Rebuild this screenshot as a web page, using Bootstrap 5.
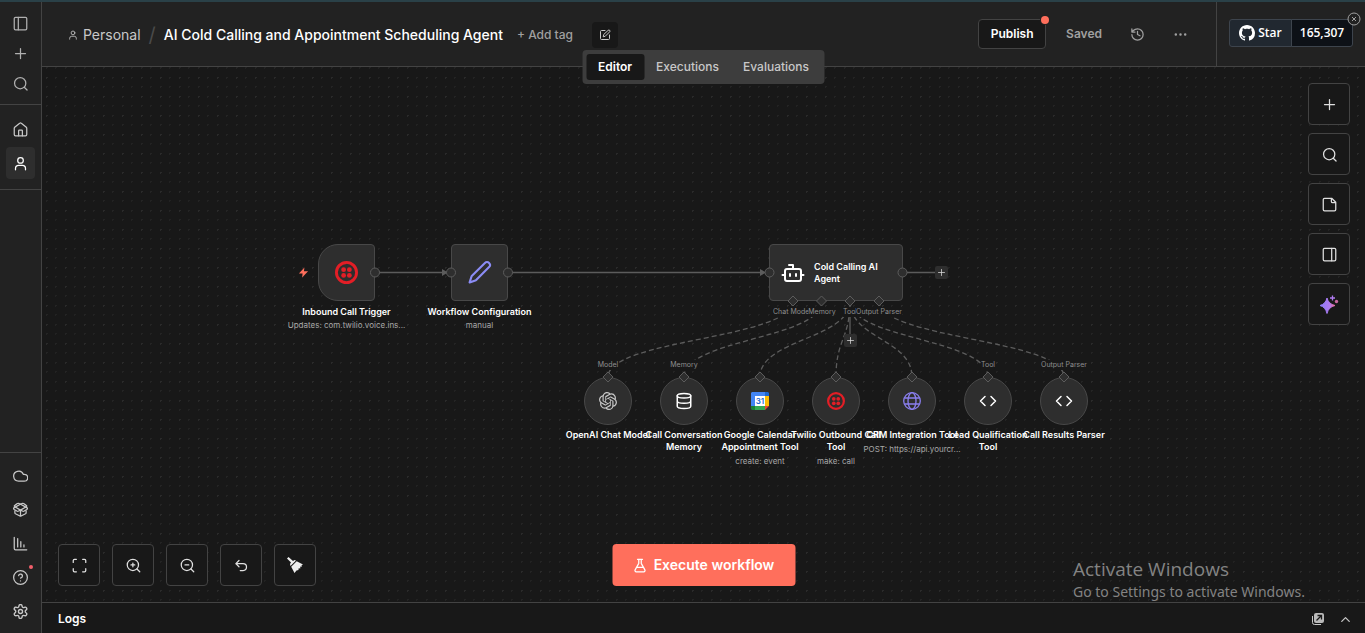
<!DOCTYPE html>
<html lang="en" data-bs-theme="dark">
<head>
<meta charset="utf-8">
<meta name="viewport" content="width=device-width, initial-scale=1">
<title>AI Cold Calling and Appointment Scheduling Agent</title>
<link href="https://cdn.jsdelivr.net/npm/bootstrap@5.3.0/dist/css/bootstrap.min.css" rel="stylesheet">
<style>
  body { font-family: Inter, "Liberation Sans", sans-serif; font-size: 12px; line-height: 20px; background: #181818; color: #fff; }
  svg { display: block; flex: none; }
  .ico { width: 15px; height: 15px; fill: none; stroke: currentColor; stroke-width: 2; stroke-linecap: round; stroke-linejoin: round; }
  .ico-lg { width: 24px; height: 24px; }
  .ico-md { width: 18px; height: 18px; }
  .ico-sm { width: 12px; height: 12px; }
  .ico-xs { width: 10px; height: 10px; }
  .accent-bar { height: 2px; background: #2a4148; flex: none; }
  .side { width: 42px; background: #222; border-right: 1px solid #434343; color: #b0b0b0; }
  .side-top { padding: 6px 0; border-bottom: 1px solid #434343; }
  .side-mid { padding: 8px 0; border-bottom: 1px solid #434343; }
  .side-low { padding: 6px 0 4px; border-top: 1px solid #434343; }
  .side a { width: 29px; height: 30px; margin: 0 auto; border-radius: 4px; color: inherit; display: flex; align-items: center; justify-content: center; position: relative; }
  .side-mid a, .side-low a { height: 32px; margin-bottom: 2px; color: #c8c8c8; }
  .side a.current { background: #2e2e2e; color: #fff; }
  .alert-dot { position: absolute; top: 4px; right: 2px; width: 4px; height: 4px; border-radius: 50%; background: #f25f6b; }
  .topbar { height: 65px; background: #222; border-bottom: 1px solid #434343; }
  .crumbs { font-size: 14px; padding: 1px 0 0 26px; }
  .crumbs a { color: #c8c8c8; text-decoration: none; gap: 5px; }
  .crumbs .slash { color: #4a4a4a; font-size: 20px; margin: 0 8px; }
  .crumbs h1 { font-size: 14px; font-weight: 500; line-height: 20px; color: #fff; margin: 0; }
  .flat { border: 0; background: none; padding: 0; color: #a0a0a0; }
  .add-tag { font-size: 12px; font-weight: 500; margin-left: 14px; }
  .edit-btn { width: 26px; height: 26px; background: #181818; color: #c8c8c8; border-radius: 4px; margin-left: 19px; }
  .publish { width: 68px; height: 30px; border: 1px solid #434343; border-radius: 4px; background: #181818; color: #fff; font-weight: 600; padding: 0; position: relative; }
  .publish i { position: absolute; top: -4px; right: -4px; width: 8px; height: 8px; background: #ff6f5c; border-radius: 50%; box-shadow: 0 0 0 1px #222; }
  .saved { color: #a0a0a0; font-weight: 600; }
  .gh-zone { border-left: 1px solid #434343; padding: 17px 12px 0; width: 149px; }
  .gh { position: relative; height: 28px; font-family: "Open Sans", sans-serif; font-size: 12px; font-weight: 600; }
  .gh a { color: #fff; text-decoration: none; border: 1px solid #3d444d; display: flex; align-items: center; justify-content: center; }
  .gh-star { background: #212830; width: 63px; border-radius: 3px 0 0 3px; gap: 3px; }
  .gh-count { background: #0d1117; width: 62px; border-radius: 0 3px 3px 0; margin-left: -1px; }
  .gh-close { position: absolute; top: -7px; right: -8px; color: #a0a0a0; }
  .view-tabs { position: absolute; z-index: 5; top: -17px; left: 50%; transform: translateX(-50%); padding: 4px; background: #3d3d3d; border-radius: 4px; font-size: 12px; font-weight: 500; }
  .view-tabs .nav-link { padding: 3px 12px; color: #c8c8c8; border-radius: 3px; line-height: 20px; font-weight: 500; }
  .view-tabs .nav-link.active { background: #181818; color: #fff; font-weight: 600; }
  .board { background-color: #181818;
    background-image: radial-gradient(circle, #2a2a2a 0 1px, transparent 1px), radial-gradient(circle, #242424 0 1px, transparent 1px), radial-gradient(circle, #242424 0 1px, transparent 1px), radial-gradient(circle, #222 0 1px, transparent 1px);
    background-size: 19px 19px; background-position: -5px 1px, 4px 1px, -5px -9px, 4px -9px; }
  .tile { width: 42px; height: 42px; padding: 0; border: 1px solid #434343; border-radius: 4px; background: #181818; color: #e0e0e0; display: flex; align-items: center; justify-content: center; }
  .dock { position: absolute; bottom: 16px; left: 16px; gap: 12px; }
  .rail { position: absolute; top: 16px; right: 15px; gap: 8px; }
  .run { position: absolute; bottom: 16px; left: 50%; transform: translateX(-50%); height: 42px; width: 183px; border: 0; border-radius: 4px; background: #ff6f5c; color: #fff; font-size: 14px; font-weight: 600; gap: 6px; }
  .logs { height: 31px; border-top: 1px solid #434343; padding: 2px 12px 0 16px; background: #181818; font-size: 12px; font-weight: 600; }
  .logs .flat { color: #c8c8c8; }
  .pop-out { margin-right: 14px; }
  .watermark { position: absolute; z-index: 9; right: 56px; bottom: 31px; color: #838383; font-family: "Open Sans", sans-serif; pointer-events: none; width: 236px; white-space: nowrap; }
  .watermark b { display: block; font-weight: 400; font-size: 19px; line-height: 26px; }
  .watermark span { display: block; font-family: "Noto Sans", sans-serif; font-size: 14px; line-height: 20px; }

  /* workflow graph: the nodes sit on a free canvas */
  .wires { position: absolute; left: 0; top: 0; width: 1100px; height: 420px; }
  .wires path { fill: none; stroke: #5c5c5c; stroke-width: 1.3; }
  .wires .dashed { stroke-dasharray: 5 3; }
  .wires .heads { fill: #5c5c5c; stroke: none; }
  .step { position: absolute; top: 177px; width: 57px; height: 57px; border: 1px solid #484848; border-radius: 4px; background: #2e2e2e; display: flex; align-items: center; justify-content: center; }
  .step.trigger { left: 276px; border-radius: 20px 4px 4px 20px; }
  .step.config { left: 409px; }
  .step.agent { left: 727px; width: 134px; justify-content: start; gap: 9px; padding-left: 11px; font-size: 9px; font-weight: 600; line-height: 12px; }
  .round { top: 310px; width: 48px; height: 48px; border-radius: 50%; }
  .n1 { left: 542px; } .n2 { left: 618px; } .n3 { left: 694px; } .n4 { left: 770px; } .n5 { left: 846px; } .n6 { left: 922px; } .n7 { left: 998px; }
  .caption { position: absolute; top: 100%; left: 50%; width: 130px; margin: 6px 0 0 -65px; text-align: center; font-size: 9px; font-weight: 600; line-height: 12px; }
  .round .caption { width: 100px; margin: 5px 0 0 -50px; white-space: nowrap; }
  .caption small { display: block; font-size: 8px; font-weight: 400; color: #a8a8a8; line-height: 14px; }
  .round small { margin-top: 1px; }
  .bolt { position: absolute; left: -21px; top: 22px; }
  .ports { position: absolute; left: 0; top: 0; width: 1100px; height: 420px; fill: #2e2e2e; stroke: #5c5c5c; pointer-events: none; }
  .port-name { position: absolute; top: 240px; transform: translateX(-50%); font-size: 7px; line-height: 10px; color: #8f8f8f; background: #181818; white-space: nowrap; }
  .port-name.low { top: 293px; }
  .p1 { left: 750px; } .p2 { left: 780px; } .p3 { left: 808px; } .p4 { left: 837px; }
  .q1 { left: 566px; } .q2 { left: 642px; } .q6 { left: 946px; } .q7 { left: 1022px; }
  .adder { position: absolute; width: 13px; height: 13px; padding: 0; border: 0; border-radius: 2px; background: #2e2e2e; color: #ddd; display: flex; align-items: center; justify-content: center; }
  .adder .ico { width: 9px; height: 9px; }
  .a1 { left: 893px; top: 199px; } .a2 { left: 802px; top: 267px; }
</style>
</head>
<body class="vh-100 d-flex flex-column overflow-hidden position-relative">
<svg class="d-none" xmlns="http://www.w3.org/2000/svg">
  <symbol id="plus" viewBox="0 0 24 24"><path d="M4 12h16M12 4v16"/></symbol>
  <symbol id="search" viewBox="0 0 24 24"><circle cx="11.500" cy="11.500" r="9"/><path d="m22.500 22.500-4.500-4.500"/></symbol>
  <symbol id="user" viewBox="0 0 24 24"><circle cx="12" cy="7" r="4.500"/><path d="M4 22v-2a5 5 0 0 1 5-5h6a5 5 0 0 1 5 5v2"/></symbol>
  <symbol id="twilio" viewBox="0 0 24 24"><g stroke="none" fill="#e31e26"><path fill-rule="evenodd" d="M12 0a12 12 0 1 0 0 24 12 12 0 0 0 0-24zm0 3a9 9 0 1 1 0 18 9 9 0 0 1 0-18z"/><circle cx="9" cy="9" r="2.500"/><circle cx="15" cy="9" r="2.500"/><circle cx="9" cy="15" r="2.500"/><circle cx="15" cy="15" r="2.500"/></g></symbol>
  <symbol id="code" viewBox="0 0 24 24"><path d="m16 18 6-6-6-6M8 6l-6 6 6 6"/></symbol>
</svg>

<div class="accent-bar"></div>
<div class="d-flex flex-grow-1">
  <nav class="side d-flex flex-column flex-shrink-0" aria-label="Main">
    <div class="side-top">
      <a href="#" aria-label="Toggle sidebar"><svg class="ico" viewBox="0 0 24 24"><rect x="2" y="2" width="20" height="20" rx="2"/><path d="M8.500 2v20"/></svg></a>
      <a href="#" aria-label="Add"><svg class="ico"><use href="#plus"/></svg></a>
      <a href="#" aria-label="Search"><svg class="ico"><use href="#search"/></svg></a>
    </div>
    <div class="side-mid">
      <a href="#" aria-label="Overview"><svg class="ico" viewBox="0 0 24 24"><path d="M15 22v-8a1 1 0 0 0-1-1h-4a1 1 0 0 0-1 1v8"/><path d="M2 10a2 2 0 0 1 .7-1.500l8-6.500a2 2 0 0 1 2.600 0l8 6.500a2 2 0 0 1 .7 1.500v10a2 2 0 0 1-2 2H4a2 2 0 0 1-2-2z"/></svg></a>
      <a href="#" class="current" aria-label="Personal"><svg class="ico"><use href="#user"/></svg></a>
    </div>
    <div class="side-low mt-auto">
      <a href="#" aria-label="Admin panel"><svg class="ico" viewBox="0 0 24 24"><path d="M18 21H9A8 8 0 1 1 16.500 10H18a5.500 5.500 0 0 1 0 11Z"/></svg></a>
      <a href="#" aria-label="Templates"><svg class="ico" viewBox="0 0 24 24"><path d="M12 22v-9M3 14v3a2 2 0 0 0 1 1.700l7 3.800a2 2 0 0 0 2 0l7-3.800a2 2 0 0 0 1-1.700v-3"/><path d="m12 13-8.500-5c-2-1-2-2 0-3L7 2.500c1-.6 2-.6 3 0l12 6.500c1.500 1 1.500 2 0 3l-4 2.500c-1 .5-2 .5-3 0z"/><path d="m12 13 8.500-5c2-1 2-2 0-3L17 2.500c-1-.6-2-.6-3 0L2 9c-1.500 1-1.500 2 0 3l4 2.500c1 .5 2 .5 3 0z"/></svg></a>
      <a href="#" aria-label="Insights"><svg class="ico" viewBox="0 0 24 24"><path d="M2 2v18a2 2 0 0 0 2 2h18M7.500 17.500V4M12.500 17.500V9M17.500 17.500V14"/></svg></a>
      <a href="#" aria-label="Help"><svg class="ico" viewBox="0 0 24 24"><circle cx="12" cy="12" r="11"/><path d="M9 9a3 3 0 0 1 6 1c0 2-3 3-3 3M12 17.500h.01"/></svg><span class="alert-dot"></span></a>
      <a href="#" aria-label="Settings"><svg class="ico" viewBox="1 1 22 22"><path d="M9.700 4.100a2.300 2.300 0 0 1 4.600 0 2.300 2.300 0 0 0 3.300 1.900 2.300 2.300 0 0 1 2.400 4 2.300 2.300 0 0 0 0 3.900 2.300 2.300 0 0 1-2.400 4 2.300 2.300 0 0 0-3.300 2 2.300 2.300 0 0 1-4.600 0 2.300 2.300 0 0 0-3.300-2 2.300 2.300 0 0 1-2.400-4 2.300 2.300 0 0 0 0-3.900A2.300 2.300 0 0 1 6.400 6a2.300 2.300 0 0 0 3.300-1.900"/><circle cx="12" cy="12" r="3"/></svg></a>
    </div>
  </nav>

  <div class="d-flex flex-column flex-grow-1">
    <header class="topbar d-flex">
      <div class="crumbs d-flex align-items-center flex-grow-1">
        <a href="#" class="d-flex align-items-center"><svg class="ico ico-xs"><use href="#user"/></svg>Personal</a>
        <span class="slash">/</span>
        <h1>AI Cold Calling and Appointment Scheduling Agent</h1>
        <button class="flat add-tag">+ Add tag</button>
        <button class="flat edit-btn d-flex align-items-center justify-content-center" aria-label="Edit description"><svg class="ico ico-sm" viewBox="0 0 24 24"><path d="M12 3H5a2 2 0 0 0-2 2v14a2 2 0 0 0 2 2h14a2 2 0 0 0 2-2v-7"/><path d="M18.400 2.600a2 2 0 0 1 3 3l-9 9-4 1 1-4z"/></svg></button>
      </div>
      <div class="d-flex align-items-center">
        <button class="publish">Publish<i></i></button>
        <span class="saved ms-3 px-1">Saved</span>
        <button class="flat ms-4" aria-label="History"><svg class="ico" viewBox="0 0 24 24"><path d="M3 12a9 9 0 1 0 9-9 9.800 9.800 0 0 0-6.700 2.700L3 8M3 3v5h5M12 7v5l4 2"/></svg></button>
        <button class="flat ms-4 me-4 px-1" aria-label="More"><svg class="ico" viewBox="0 0 24 24"><path d="M4.500 12h.01M12 12h.01M19.500 12h.01" stroke-width="4"/></svg></button>
        <div class="gh-zone align-self-stretch">
          <div class="gh d-flex">
            <a href="#" class="gh-star"><svg width="16" height="16" viewBox="0 0 16 16" fill="#fff"><path d="M8 0C3.580 0 0 3.580 0 8c0 3.540 2.290 6.530 5.470 7.590.4.070.55-.17.55-.38 0-.19-.01-.82-.01-1.490-2.010.37-2.530-.49-2.690-.94-.09-.23-.48-.94-.82-1.130-.28-.15-.68-.52-.01-.53.63-.01 1.080.58 1.230.82.72 1.210 1.870.87 2.330.66.070-.52.28-.87.51-1.070-1.780-.2-3.640-.89-3.640-3.950 0-.87.31-1.590.82-2.150-.08-.2-.36-1.020.08-2.120 0 0 .67-.21 2.200.82.64-.18 1.320-.27 2-.27s1.360.09 2 .27c1.530-1.040 2.200-.82 2.200-.82.44 1.100.16 1.920.08 2.120.51.56.82 1.270.82 2.150 0 3.070-1.870 3.750-3.650 3.950.29.25.54.73.54 1.480 0 1.070-.01 1.930-.01 2.200 0 .21.15.46.55.38A8.010 8.010 0 0 0 16 8c0-4.420-3.580-8-8-8z"/></svg>Star</a>
            <a href="#" class="gh-count">165,307</a>
            <button class="flat gh-close" aria-label="Dismiss"><svg width="14" height="14" viewBox="0 0 14 14" fill="#222" stroke="currentColor"><circle cx="7" cy="7" r="6"/><path d="m5 5 4 4M9 5 5 9"/></svg></button>
          </div>
        </div>
      </div>
    </header>

    <main class="board flex-grow-1 position-relative">
      <ul class="view-tabs nav flex-nowrap">
        <li><a class="nav-link active" href="#">Editor</a></li>
        <li><a class="nav-link" href="#">Executions</a></li>
        <li><a class="nav-link" href="#">Evaluations</a></li>
      </ul>

      <svg class="wires" viewBox="42 67 1100 420">
        <path d="M375 272.500H445M508 272.500H764M903 272.500H936M850 301V335"/>
        <g class="dashed">
          <path d="M793 301C793 339 608 339 608 377"/><path d="M822 301C822 339 684 339 684 377"/>
          <path d="M850 301C850 339 760 339 760 377"/><path d="M850 301C850 339 836 339 836 377"/>
          <path d="M850 301C850 339 912 339 912 377"/><path d="M850 301C850 339 988 339 988 377"/>
          <path d="M879 301C879 339 1064 339 1064 377"/>
        </g>
        <path class="heads" d="M442 269v7l6-3.500zM760 269v7l6-3.500z"/>
      </svg>

      <span class="port-name p1">Chat Model</span><span class="port-name p3">Tool</span><span class="port-name p2">Memory</span><span class="port-name p4">Output Parser</span>
      <span class="port-name low q1">Model</span><span class="port-name low q2">Memory</span><span class="port-name low q6">Tool</span><span class="port-name low q7">Output Parser</span>

      <div class="step trigger">
        <svg class="bolt" width="11" height="11" viewBox="0 0 24 24" fill="#ff6f5c"><path d="M14 1 2 14h8l-1 9L22 9h-9z"/></svg>
        <svg width="23" height="23"><use href="#twilio"/></svg>
        <div class="caption">Inbound Call Trigger<small>Updates: com.twilio.voice.ins...</small></div>
      </div>
      <div class="step config">
        <svg width="25" height="25" viewBox="0 0 24 24" fill="none" stroke="#8b8cf5" stroke-width="2" stroke-linejoin="round"><path d="M21.200 6.800a1 1 0 0 0-4-4L4.800 15.200a2 2 0 0 0-.5.800L2.500 21.500 8 19.700a2 2 0 0 0 .8-.5z"/></svg>
        <div class="caption">Workflow Configuration<small>manual</small></div>
      </div>
      <div class="step agent">
        <svg class="ico ico-lg" viewBox="0 0 24 24"><path d="M12 8V4H8M1.500 14H4M20 14h2.500M15 13v2M9 13v2"/><rect x="4" y="8" width="16" height="12" rx="2"/></svg>
        <span>Cold Calling AI<br>Agent</span>
      </div>

      <div class="step round n1">
        <svg width="18" height="18" viewBox="0 0 24 24" fill="#c8c8c8"><path d="M22.282 9.821a5.985 5.985 0 0 0-.516-4.911 6.046 6.046 0 0 0-6.510-2.900A6.065 6.065 0 0 0 4.981 4.182a5.985 5.985 0 0 0-3.998 2.900 6.046 6.046 0 0 0 .743 7.097 5.980 5.980 0 0 0 .511 4.911 6.051 6.051 0 0 0 6.515 2.900A5.985 5.985 0 0 0 13.260 24a6.056 6.056 0 0 0 5.772-4.206 5.989 5.989 0 0 0 3.998-2.900 6.056 6.056 0 0 0-.748-7.073zm-9.022 12.608a4.476 4.476 0 0 1-2.876-1.041l.142-.080 4.778-2.758a.795.795 0 0 0 .393-.681v-6.737l2.020 1.169a.071.071 0 0 1 .038.052v5.583a4.504 4.504 0 0 1-4.495 4.494zm-9.661-4.125a4.471 4.471 0 0 1-.535-3.014l.142.085 4.783 2.758a.771.771 0 0 0 .781 0l5.843-3.369v2.332a.080.080 0 0 1-.033.062L9.740 19.950a4.499 4.499 0 0 1-6.141-1.646zM2.341 7.896a4.485 4.485 0 0 1 2.366-1.973V11.600a.766.766 0 0 0 .388.677l5.814 3.354-2.020 1.169a.076.076 0 0 1-.071 0l-4.830-2.787A4.504 4.504 0 0 1 2.341 7.872zm16.596 3.856L13.104 8.364 15.119 7.200a.076.076 0 0 1 .071 0l4.830 2.791a4.494 4.494 0 0 1-.677 8.104v-5.677a.790.790 0 0 0-.407-.667zm2.011-3.023l-.142-.085-4.774-2.782a.776.776 0 0 0-.785 0L9.409 9.230V6.897a.066.066 0 0 1 .028-.062l4.830-2.787a4.499 4.499 0 0 1 6.680 4.660zM8.307 12.863l-2.020-1.164a.080.080 0 0 1-.038-.057V6.074a4.499 4.499 0 0 1 7.376-3.454l-.142.081L8.704 5.459a.795.795 0 0 0-.393.681zm1.098-2.365l2.602-1.500 2.607 1.500v2.999l-2.597 1.500-2.607-1.500Z"/></svg>
        <div class="caption">OpenAI Chat Model</div>
      </div>
      <div class="step round n2">
        <svg class="ico ico-md" viewBox="0 0 24 24"><ellipse cx="12" cy="5" rx="9" ry="3"/><path d="M3 5v14a9 3 0 0 0 18 0V5M3 12a9 3 0 0 0 18 0"/></svg>
        <div class="caption">Call Conversation<br>Memory</div>
      </div>
      <div class="step round n3">
        <svg width="18" height="18" viewBox="0 0 18 18"><path fill="#4285f4" d="M1 0h13v4H4v10H0V1z"/><path fill="#1a67d2" d="M14 0h3l1 1v3h-4z"/><path fill="#fbbc04" d="M14 4h4v10h-4z"/><path fill="#34a853" d="M4 14h10v4H4z"/><path fill="#188038" d="M0 14h4v4H1l-1-1z"/><path fill="#ea4335" d="M14 14h4l-4 4z"/><path fill="#fff" d="M4 4h10v10H4z"/><text x="9" y="12" text-anchor="middle" font-size="8" font-weight="600" fill="#1a67d2">31</text></svg>
        <div class="caption">Google Calendar<br>Appointment Tool<small>create: event</small></div>
      </div>
      <div class="step round n4">
        <svg width="18" height="18"><use href="#twilio"/></svg>
        <div class="caption">Twilio Outbound Call<br>Tool<small>make: call</small></div>
      </div>
      <div class="step round n5">
        <svg width="18" height="18" viewBox="0 0 18 18" fill="none" stroke="#8b7ff0" stroke-width="1.300"><circle cx="9" cy="9" r="8.300"/><ellipse cx="9" cy="9" rx="4" ry="8.300"/><path d="M1.500 6h15M1.500 12h15"/></svg>
        <div class="caption">CRM Integration Tool<small>POST: https://api.yourcr...</small></div>
      </div>
      <div class="step round n6"><svg class="ico ico-md"><use href="#code"/></svg><div class="caption">Lead Qualification<br>Tool</div></div>
      <div class="step round n7"><svg class="ico ico-md"><use href="#code"/></svg><div class="caption">Call Results Parser</div></div>

      <svg class="ports" viewBox="42 67 1100 420">
        <circle cx="375" cy="272.500" r="4.500"/><circle cx="451" cy="272.500" r="4.500"/><circle cx="508" cy="272.500" r="4.500"/><circle cx="769.500" cy="272.500" r="4.500"/><circle cx="902.500" cy="272.500" r="4.500"/>
        <path d="M793 296l5 5-5 5-5-5zM821.500 296l5 5-5 5-5-5zM850 296l5 5-5 5-5-5zM879 296l5 5-5 5-5-5z"/>
        <path d="M608 372l5 5-5 5-5-5zM684 372l5 5-5 5-5-5zM760 372l5 5-5 5-5-5zM836 372l5 5-5 5-5-5zM912 372l5 5-5 5-5-5zM988 372l5 5-5 5-5-5zM1064 372l5 5-5 5-5-5z"/>
      </svg>
      <button class="adder a1" aria-label="Add next step"><svg class="ico"><use href="#plus"/></svg></button>
      <button class="adder a2" aria-label="Add tool"><svg class="ico"><use href="#plus"/></svg></button>

      <div class="rail d-flex flex-column">
        <button class="tile" aria-label="Add node"><svg class="ico"><use href="#plus"/></svg></button>
        <button class="tile" aria-label="Search nodes"><svg class="ico"><use href="#search"/></svg></button>
        <button class="tile" aria-label="Add sticky note"><svg class="ico" viewBox="0 0 24 24"><path d="M15.500 2H4a2 2 0 0 0-2 2v16a2 2 0 0 0 2 2h16a2 2 0 0 0 2-2V8.500zM15 2v5a2 2 0 0 0 2 2h5"/></svg></button>
        <button class="tile" aria-label="Toggle panel"><svg class="ico" viewBox="0 0 24 24"><rect x="2" y="2" width="20" height="20" rx="2"/><path d="M15.500 2v20"/></svg></button>
        <button class="tile" aria-label="Ask AI"><svg width="20" height="20" viewBox="0 0 20 20"><defs><linearGradient id="ai"><stop offset="0" stop-color="#8b7cf8"/><stop offset=".65" stop-color="#b07af0"/><stop offset="1" stop-color="#f0709a"/></linearGradient></defs><path fill="url(#ai)" d="M8 4q1.500 6 8 7.500Q9.500 13 8 19.500 6.500 13 1 11.500 6.500 10 8 4z" stroke="url(#ai)" stroke-linejoin="round"/><path d="M13.500 1.500v5M11 4h5" stroke="#b07af0" stroke-width="1.300"/><circle cx="17.500" cy="7.500" r="1.700" fill="#c9679f"/></svg></button>
      </div>

      <div class="dock d-flex">
        <button class="tile" aria-label="Fit view"><svg class="ico" viewBox="0 0 24 24"><path d="M7 2H4a2 2 0 0 0-2 2v3M17 2h3a2 2 0 0 1 2 2v3M7 22H4a2 2 0 0 1-2-2v-3M17 22h3a2 2 0 0 0 2-2v-3"/></svg></button>
        <button class="tile" aria-label="Zoom in"><svg class="ico" viewBox="0 0 24 24"><circle cx="11" cy="11" r="9"/><path d="m22 22-4.500-4.500M11 8v6M8 11h6"/></svg></button>
        <button class="tile" aria-label="Zoom out"><svg class="ico" viewBox="0 0 24 24"><circle cx="11" cy="11" r="9"/><path d="m22 22-4.500-4.500M8 11h6"/></svg></button>
        <button class="tile" aria-label="Undo"><svg class="ico" viewBox="0 0 24 24"><path d="M8 14 3 9l5-5M3 9h11.500a5.500 5.500 0 0 1 0 11H10"/></svg></button>
        <button class="tile" aria-label="Tidy up"><svg width="16" height="16" viewBox="0 0 16 16" fill="#eee"><path d="M1.500 0 6 4l1.500-1 1.500.5L3.500 9 3 7l1-1.500L0 1.500z"/><path d="M9.700 4.300 16 7.500l-1.500.8.5 1.200-2 .2.500 1.600-2 .2v1.500l-2 .5L7.500 16 4.200 9.800z"/></svg></button>
      </div>
      <button class="run d-flex align-items-center justify-content-center"><svg class="ico" viewBox="0 0 24 24"><path d="M14 2v6a2 2 0 0 0 .2 1l5.600 10a2 2 0 0 1-1.800 3H6a2 2 0 0 1-1.800-3L9.800 9A2 2 0 0 0 10 8V2M6.500 15h11M8 2h8"/></svg>Execute workflow</button>
    </main>

    <footer class="logs d-flex align-items-center">
      <span class="flex-grow-1">Logs</span>
      <button class="flat pop-out" aria-label="Pop out"><svg width="12" height="12" viewBox="0 0 12 12"><path fill="none" stroke="#c8c8c8" d="M.5 3v6.500a2 2 0 0 0 2 2H9"/><rect x="2" width="10" height="10" rx="2" fill="#b9b9b9"/><path fill="none" stroke="#181818" stroke-width="1.300" d="m4.500 7.500 5-5M5.500 2.500h4v4"/></svg></button>
      <button class="flat" aria-label="Expand"><svg class="ico" viewBox="0 0 24 24"><path d="m6 15 6-6 6 6"/></svg></button>
    </footer>
  </div>
</div>
<div class="watermark"><b>Activate Windows</b><span>Go to Settings to activate Windows.</span></div>
<script src="https://cdn.jsdelivr.net/npm/bootstrap@5.3.0/dist/js/bootstrap.bundle.min.js"></script>
</body>
</html>
